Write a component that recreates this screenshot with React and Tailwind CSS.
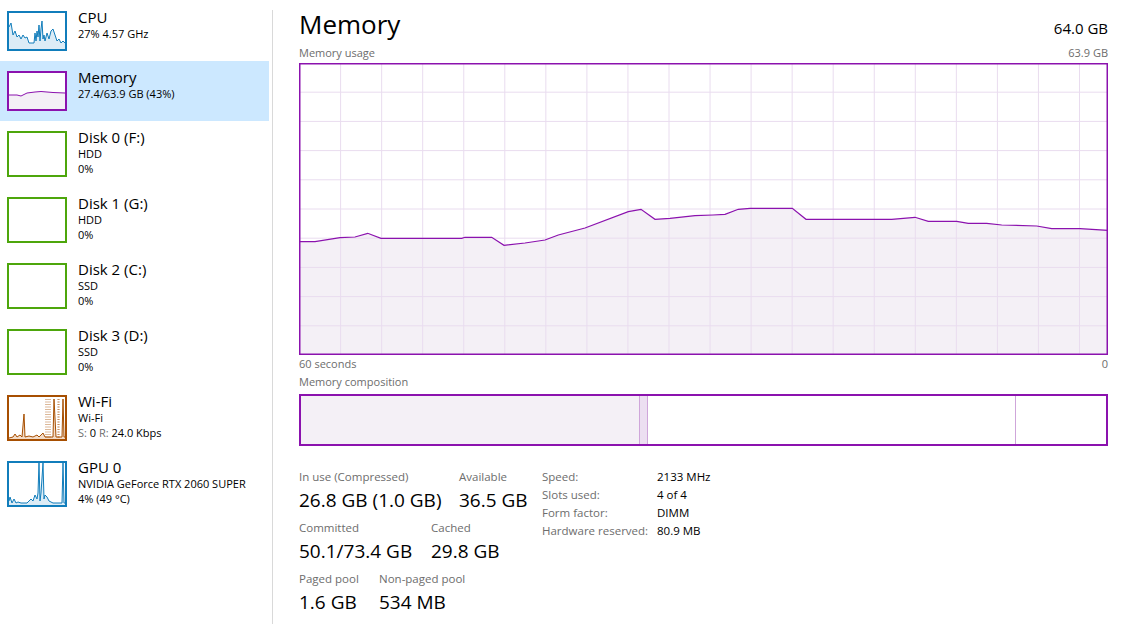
import React from "react";

const font = { fontFamily: '"Open Sans", "Noto Sans", sans-serif' };

// points are in a 56 x H box (inner thumbnail area)
const cpuPts = "0,14 2,10 4,22 6,18 8,24 10,22 12,26 14,22 16,25 18,24 20,30 25,30 26,20 27,28 28,18 29,24 30,12 31,28 32,16 33,8 34,26 35,22 36,28 38,20 40,26 42,18 44,16 46,22 48,28 50,26 52,30 54,28 56,30";
const memPts = "0,22 8,22 12,23 18,20 26,19 32,18.5 38,19 44,19.5 56,20";
const wifiPts = "0,41 4,40 6,37 8,40 11,38 13,40 15,17 16,40 20,39 24,40 28,38 30,40 34,36 36,40 38,40 44,40 45,2 47,40 50,40 53,40 54,2 55,40 56,40";
const gpuPts = "0,38 1,34 3,40 5,36 7,40 9,39 12,40 18,40 22,36 24,38 26,32 28,36 29,30 30,0 31,38 32,30 34,0 35,36 36,32 38,34 40,38 44,40 53,40 54,0 55,40 56,40";

function Thumb({ color, fill, pts, h, dots }) {
  return (
    <div
      className="mt-[10px] w-[60px] shrink-0 border-2 bg-white"
      style={{ borderColor: color, height: h }}
    >
      <svg width="56" height={h - 4} viewBox={`0 0 56 ${h - 4}`} preserveAspectRatio="none" className="block">
        {pts && (
          <>
            <polygon points={`0,${h - 4} ${pts} 56,${h - 4}`} fill={fill} />
            <polyline points={pts} fill="none" stroke={color} strokeWidth="1" />
          </>
        )}
        {dots &&
          dots.map((x) => (
            <line key={x} x1={x} y1="2" x2={x} y2={h - 4} stroke={color} strokeWidth="0.8" strokeDasharray="1 1.5" />
          ))}
      </svg>
    </div>
  );
}

function SideItem({ title, lines, thumb, h, selected }) {
  return (
    <div className={`flex w-[269px] px-[7px] ${selected ? "bg-[#cce8ff]" : ""}`} style={{ height: h }}>
      {thumb}
      <div className="ml-[11px] pt-[6px] text-black">
        <div className="text-[15px] leading-[20px]">{title}</div>
        {lines.map((l, i) => (
          <div key={i} className="text-[11px] leading-[14.5px] whitespace-nowrap">
            {l}
          </div>
        ))}
      </div>
    </div>
  );
}

const linePts = [
  [0, 178.7], [16, 178.7], [41, 174.7], [56, 174], [68.7, 170.3], [82, 175.3], [162.7, 175.3], [166, 174.3],
  [192.7, 174.3], [205, 182.3], [226, 180], [246, 177], [259.3, 172], [286, 165], [329.3, 148.7], [342, 146.3],
  [356, 156.3], [371, 155.3], [396, 152.7], [414, 152], [426, 151.3], [439.3, 146.3], [451, 145.3], [493.3, 145.3],
  [507, 156.3], [592.7, 156.3], [616, 154.3], [629.3, 158.3], [657.7, 158.3], [669.3, 160.3], [687.7, 160.3],
  [702.7, 162], [737.7, 163], [752.7, 165.7], [781, 165.7], [809, 167.3],
];

function UsageChart() {
  const W = 809;
  const H = 292;
  const vx = Array.from({ length: 19 }, (_, k) => 41.6 + 41.05 * k);
  const hy = Array.from({ length: 9 }, (_, k) => 29.2 * (k + 1));
  const pts = linePts.map((p) => p.join(",")).join(" ");
  return (
    <svg width={W} height={H} viewBox={`0 0 ${W} ${H}`} className="block">
      <rect x="0" y="0" width={W} height={H} fill="#ffffff" />
      <polygon points={`0,${H} ${pts} ${W},${H}`} fill="#f4f0f6" />
      {vx.map((x) => (
        <line key={x} x1={x} y1="0" x2={x} y2={H} stroke="#e9dcef" strokeWidth="1" />
      ))}
      {hy.map((y) => (
        <line key={y} x1="0" y1={y} x2={W} y2={y} stroke="#e9dcef" strokeWidth="1" />
      ))}
      <polyline points={pts} fill="none" stroke="#8b12ae" strokeWidth="1.2" />
      <rect x="0.75" y="0.75" width={W - 1.5} height={H - 1.5} fill="none" stroke="#8b12ae" strokeWidth="1.5" />
    </svg>
  );
}

function Stat({ label, value, w }) {
  return (
    <div style={{ width: w }} className="shrink-0">
      <div className="text-[11.5px] leading-[16px] text-[#6d6d6d] whitespace-nowrap">{label}</div>
      <div className="mt-[2px] text-[19px] leading-[26px] text-black whitespace-nowrap">{value}</div>
    </div>
  );
}

export default function App() {
  return (
    <div className="flex h-[624px] w-[1123px] overflow-hidden bg-white" style={font}>
      {/* Sidebar */}
      <div className="w-[272px] shrink-0 pt-px">
        <SideItem h={60} title="CPU" lines={["27%  4.57 GHz"]} thumb={<Thumb h={40} color="#117dbb" fill="#dcecf6" pts={cpuPts} />} />
        <SideItem selected h={60} title="Memory" lines={["27.4/63.9 GB (43%)"]} thumb={<Thumb h={40} color="#8b12ae" fill="#f4f0f6" pts={memPts} />} />
        <SideItem h={66} title="Disk 0 (F:)" lines={["HDD", "0%"]} thumb={<Thumb h={46} color="#4da60c" />} />
        <SideItem h={66} title="Disk 1 (G:)" lines={["HDD", "0%"]} thumb={<Thumb h={46} color="#4da60c" />} />
        <SideItem h={66} title="Disk 2 (C:)" lines={["SSD", "0%"]} thumb={<Thumb h={46} color="#4da60c" />} />
        <SideItem h={66} title="Disk 3 (D:)" lines={["SSD", "0%"]} thumb={<Thumb h={46} color="#4da60c" />} />
        <SideItem
          h={66}
          title="Wi-Fi"
          lines={[
            "Wi-Fi",
            <span>
              <span className="text-[#6d6d6d]">S:</span> 0 <span className="text-[#6d6d6d]">R:</span> 24.0 Kbps
            </span>,
          ]}
          thumb={<Thumb h={46} color="#a74f01" fill="#f3dcc8" pts={wifiPts} dots={[37, 39, 41, 49, 50]} />}
        />
        <SideItem
          h={66}
          title="GPU 0"
          lines={["NVIDIA GeForce RTX 2060 SUPER", "4%  (49 °C)"]}
          thumb={<Thumb h={46} color="#117dbb" fill="#dcecf6" pts={gpuPts} />}
        />
      </div>

      {/* Separator */}
      <div className="mt-[10px] w-px shrink-0 bg-[#d9d9d9]" />

      {/* Main */}
      <div className="flex-1 pl-[26px] pr-[15px]">
        <div className="flex h-[45px] items-baseline justify-between pt-[6px]">
          <div className="text-[26px] leading-[36px] text-black">Memory</div>
          <div className="text-[15px] leading-[20px] text-black">64.0 GB</div>
        </div>
        <div className="flex h-[16px] justify-between text-[11px] leading-[16px] text-[#6d6d6d]">
          <span>Memory usage</span>
          <span>63.9 GB</span>
        </div>
        <div className="mt-[2px]">
          <UsageChart />
        </div>
        <div className="mt-px flex h-[16px] justify-between text-[11px] leading-[16px] text-[#6d6d6d]">
          <span>60 seconds</span>
          <span>0</span>
        </div>
        <div className="mt-[2px] h-[16px] text-[11px] leading-[16px] text-[#6d6d6d]">Memory composition</div>

        {/* Composition bar */}
        <div className="mt-[4px] flex h-[52px] w-[809px] border-2 border-[#8b12ae]">
          <div className="w-[338px] bg-[#f4f0f6]" />
          <div className="w-[9px] border-x border-[#cfa6da] bg-[#ecdff1]" />
          <div className="w-[368px] border-r border-[#cfa6da] bg-white" />
          <div className="flex-1 bg-white" />
        </div>

        {/* Stats */}
        <div className="mt-[23px] flex">
          <div className="w-[243px] shrink-0">
            <div className="flex">
              <Stat w={160} label="In use (Compressed)" value="26.8 GB (1.0 GB)" />
              <Stat label="Available" value="36.5 GB" />
            </div>
            <div className="mt-[7px] flex">
              <Stat w={132} label="Committed" value="50.1/73.4 GB" />
              <Stat label="Cached" value="29.8 GB" />
            </div>
            <div className="mt-[7px] flex">
              <Stat w={80} label="Paged pool" value="1.6 GB" />
              <Stat label="Non-paged pool" value="534 MB" />
            </div>
          </div>
          <div className="text-[11.5px] leading-[18px] -mt-px">
            {[
              ["Speed:", "2133 MHz"],
              ["Slots used:", "4 of 4"],
              ["Form factor:", "DIMM"],
              ["Hardware reserved:", "80.9 MB"],
            ].map(([k, v]) => (
              <div key={k} className="flex">
                <span className="w-[115px] text-[#6d6d6d]">{k}</span>
                <span className="text-black">{v}</span>
              </div>
            ))}
          </div>
        </div>
      </div>
    </div>
  );
}
